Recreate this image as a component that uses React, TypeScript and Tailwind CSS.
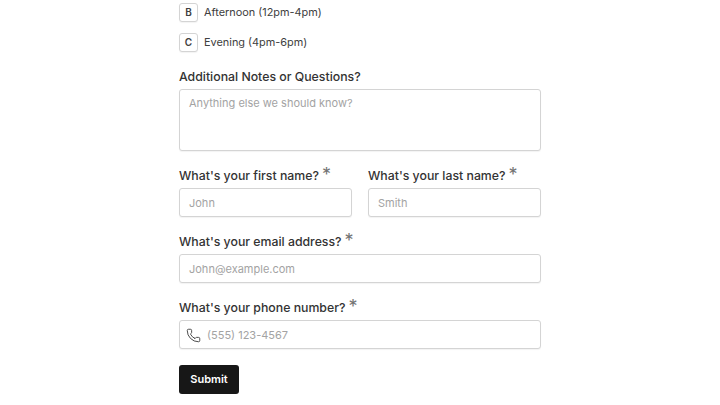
import { Phone } from "lucide-react";

function Opt({ k, t }: { k: string; t: string }) {
  return (
    <div className="flex items-center gap-[6px] h-[19px]">
      <div className="w-[19px] h-[19px] rounded-[3px] border border-[#d4d4d4] bg-white flex items-center justify-center text-[10px] font-semibold text-[#404040] shadow-[0_1px_1px_rgba(0,0,0,0.05)]">{k}</div>
      <span className="text-[10.9px] leading-[19px] text-[#404040]">{t}</span>
    </div>
  );
}

function Label({ t }: { t: string }) {
  return (
    <div className="h-[19px] flex items-start text-[12.3px] leading-[19px] font-medium text-[#333333] whitespace-nowrap">
      <span>{t}</span>
      <span className="ml-[3px] text-[18px] leading-[17px] text-[#737373] font-normal">*</span>
    </div>
  );
}

const box = "w-full h-[29px] rounded-[3px] border border-[#d4d4d4] bg-white flex items-center px-[9px] pt-[1px] text-[11px] text-[#a3a3a3] shadow-[0_1px_1px_rgba(0,0,0,0.05)]";

export default function App() {
  return (
    <div className="w-[720px] h-[405px] overflow-hidden bg-white flex justify-center font-['Inter',sans-serif]">
      <div className="w-[362px] flex flex-col pt-[3px]">
        <div className="flex flex-col gap-[11px]">
          <Opt k="B" t="Afternoon (12pm-4pm)" />
          <Opt k="C" t="Evening (4pm-6pm)" />
        </div>
        <div className="mt-[15px] h-[19px] text-[12.3px] leading-[19px] font-medium text-[#333333]">Additional Notes or Questions?</div>
        <div className="mt-[3px] h-[62px] rounded-[3px] border border-[#d4d4d4] bg-white px-[9px] pt-[5px] text-[11px] leading-[16px] text-[#a3a3a3] shadow-[0_1px_1px_rgba(0,0,0,0.05)]">Anything else we should know?</div>
        <div className="mt-[15px] grid grid-cols-[173px_173px] gap-x-[16px]">
          <div className="flex flex-col gap-[3px]"><Label t="What's your first name?" /><div className={box}>John</div></div>
          <div className="flex flex-col gap-[3px]"><Label t="What's your last name?" /><div className={box}>Smith</div></div>
        </div>
        <div className="mt-[15px] flex flex-col gap-[3px]"><Label t="What's your email address?" /><div className={box}>John@example.com</div></div>
        <div className="mt-[15px] flex flex-col gap-[3px]"><Label t="What's your phone number?" />
          <div className={box + " gap-[6px] pl-[6px]"}><Phone size={15} strokeWidth={1.5} className="text-[#404040]" /><span>(555) 123-4567</span></div>
        </div>
        <button className="mt-[16px] w-[60px] h-[29px] rounded-[3px] bg-[#171717] text-white text-[11px] font-semibold">Submit</button>
      </div>
    </div>
  );
}
